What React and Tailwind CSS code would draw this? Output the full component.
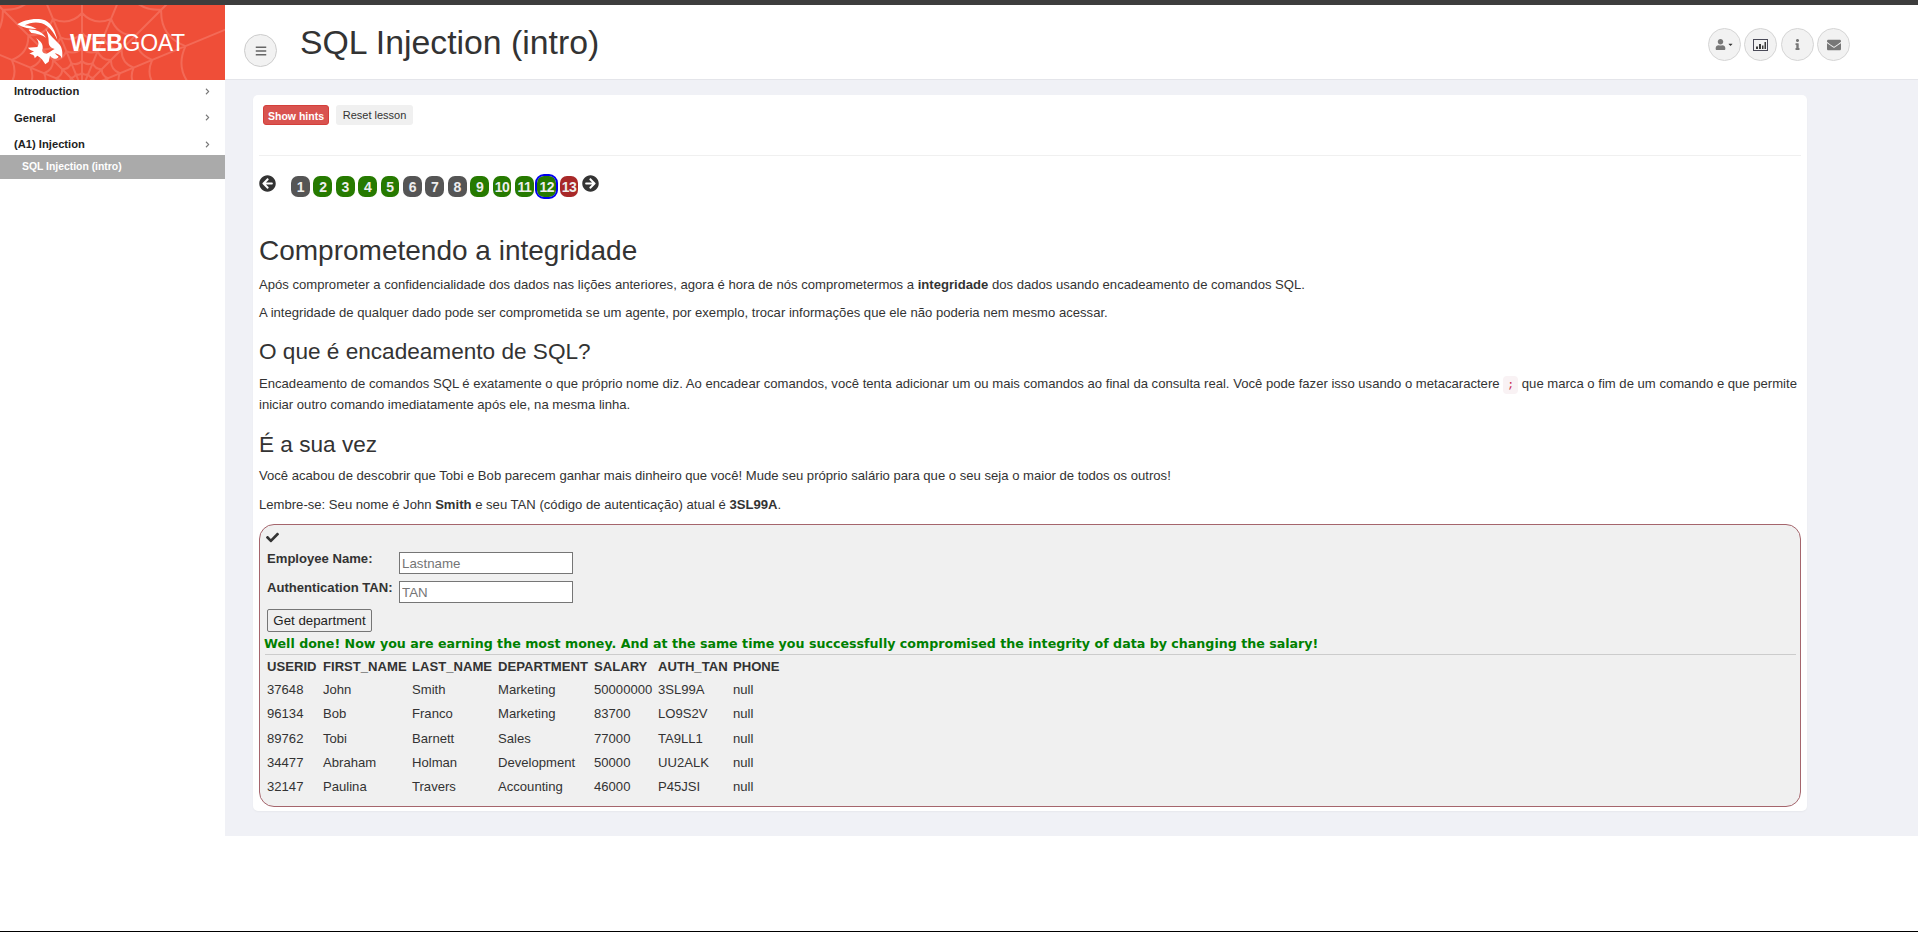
import React from 'react';
import {
  FaArrowCircleLeft,
  FaArrowCircleRight,
  FaBars,
  FaCaretDown,
  FaCheck,
  FaChevronRight,
  FaEnvelope,
  FaInfo,
  FaUser,
} from 'react-icons/fa';

const steps = [
  ['1', 'bg-[#555]'], ['2', 'bg-[#267a00]'], ['3', 'bg-[#267a00]'], ['4', 'bg-[#267a00]'],
  ['5', 'bg-[#267a00]'], ['6', 'bg-[#555]'], ['7', 'bg-[#555]'], ['8', 'bg-[#555]'],
  ['9', 'bg-[#267a00]'], ['10', 'bg-[#267a00]'], ['11', 'bg-[#267a00]'],
  ['12', 'bg-[#267a00] outline-2 outline-[#0000ee]'], ['13', 'bg-[#a82828]'],
];

const rows = [
  ['37648', 'John', 'Smith', 'Marketing', '50000000', '3SL99A', 'null'],
  ['96134', 'Bob', 'Franco', 'Marketing', '83700', 'LO9S2V', 'null'],
  ['89762', 'Tobi', 'Barnett', 'Sales', '77000', 'TA9LL1', 'null'],
  ['34477', 'Abraham', 'Holman', 'Development', '50000', 'UU2ALK', 'null'],
  ['32147', 'Paulina', 'Travers', 'Accounting', '46000', 'P45JSI', 'null'],
];

const columns = ['USERID', 'FIRST_NAME', 'LAST_NAME', 'DEPARTMENT', 'SALARY', 'AUTH_TAN', 'PHONE'];

// spider web behind the logo: spokes plus scalloped rings round one centre
function webPath() {
  const cx = 82;
  const cy = 84;
  const spokes = 9;
  const angle = (i) => Math.PI + (i * Math.PI) / (spokes - 1);
  let d = '';
  for (let i = 0; i < spokes; i++) {
    d += `M${cx} ${cy}L${(cx + 260 * Math.cos(angle(i))).toFixed(1)} ${(cy + 260 * Math.sin(angle(i))).toFixed(1)}`;
  }
  [16, 28, 41, 56, 76, 112].forEach((r) => {
    for (let i = 0; i < spokes - 1; i++) {
      const a = angle(i);
      const b = angle(i + 1);
      const m = (a + b) / 2;
      d += `M${(cx + r * Math.cos(a)).toFixed(1)} ${(cy + r * Math.sin(a)).toFixed(1)}`;
      d += `Q${(cx + r * 0.84 * Math.cos(m)).toFixed(1)} ${(cy + r * 0.84 * Math.sin(m)).toFixed(1)} ${(cx + r * Math.cos(b)).toFixed(1)} ${(cy + r * Math.sin(b)).toFixed(1)}`;
    }
  });
  return d;
}

function Logo() {
  return (
    <div className="relative h-[75px] w-[225px] overflow-hidden bg-[#ef4e38]">
      <svg className="absolute inset-0" width="225" height="75" viewBox="0 0 225 75" fill="none" stroke="#f36a57" strokeWidth="2">
        <path d={webPath()} />
      </svg>
      <svg className="absolute inset-0" width="120" height="75" viewBox="0 0 360 225" fill="#fff">
        <path d="M52 58C70 45 110 36 135 46C156 56 166 80 172 104C160 80 146 62 125 55C106 50 88 54 74 61C86 61 100 66 110 72C90 72 70 69 52 58Z" />
        <path d="M86 74C106 72 126 80 138 98C126 90 110 85 94 84Z" />
        <path d="M136 70C150 92 166 106 178 118C186 127 189 142 186 160C181 150 173 146 164 145L176 155C170 164 160 164 150 152L146 170L136 178C130 168 124 158 112 152L104 160C104 152 100 148 88 146L102 139C94 136 88 134 84 128L112 126C118 118 116 108 108 100C122 108 130 118 128 130C124 140 130 146 140 146C150 142 156 136 164 132C152 128 146 122 146 110C146 96 142 82 136 70Z" />
      </svg>
      <div className="absolute left-[70px] top-[25px] text-[23px] leading-[27px] tracking-[-0.35px] text-white">
        <span className="font-bold">WEB</span>GOAT
      </div>
    </div>
  );
}

function MenuItem({ label }) {
  return (
    <div className="flex h-[26.5px] items-center justify-between px-[14px] text-[11.2px] font-bold text-[#222]">
      <span>{label}</span>
      <FaChevronRight className="text-[7px] text-[#777]" />
    </div>
  );
}

function RoundButton({ children }) {
  return (
    <div className="flex size-[33px] items-center justify-center rounded-full border border-[#d5d5d5] bg-[#f2f2f2] text-[#777]">
      {children}
    </div>
  );
}

export default function App() {
  return (
    <div className="relative h-[932px] overflow-hidden bg-white font-['Liberation_Sans',sans-serif] text-[13.1px] leading-[20px] text-[#333]">
      <div className="h-[5px] bg-[#3d3d3d]" />
      <div className="flex">
        <aside className="w-[225px] shrink-0">
          <Logo />
          <div className="-mt-[2px] h-[77px]">
            <MenuItem label="Introduction" />
            <MenuItem label="General" />
            <MenuItem label="(A1) Injection" />
          </div>
          <div className="flex h-[24px] items-center bg-[#aaa] pl-[22px] text-[10.4px] font-bold text-white">
            SQL Injection (intro)
          </div>
        </aside>

        <main className="h-[831px] flex-1 bg-[#f0f1f6]">
          <header className="flex h-[75px] border-b border-[#e4e5ea] bg-white">
            <div className="ml-[19px] mt-[29px] flex size-[33px] items-center justify-center rounded-full border border-[#ccc] bg-[#f2f2f2] text-[12px] text-[#666]">
              <FaBars />
            </div>
            <h1 className="ml-[23px] mt-[17px] text-[33.8px] leading-[40px] text-[#333]">SQL Injection (intro)</h1>
            <div className="ml-auto mr-[68px] mt-[23px] flex gap-[3.5px]">
              <RoundButton>
                <FaUser className="text-[11px]" />
                <FaCaretDown className="ml-[1px] text-[7px] text-[#333]" />
              </RoundButton>
              <RoundButton>
                <svg width="15" height="12" viewBox="0 0 15 12" fill="none">
                  <rect x="0.5" y="0.5" width="14" height="11" stroke="#4a4a58" />
                  <path d="M3 7.5h2V10H3zM6 5h2v5H6zM9 6.5h1.500V10H9zM11.500 3H13v7h-1.500z" fill="#3a3a3a" />
                </svg>
              </RoundButton>
              <RoundButton><FaInfo className="text-[11px]" /></RoundButton>
              <RoundButton><FaEnvelope className="text-[14px]" /></RoundButton>
            </div>
          </header>

          <div className="ml-[28px] mr-[111px] mt-[15px] h-[716px] rounded-[5px] bg-white px-[6px] shadow-[0_1px_2px_rgba(0,0,0,0.04)]">
            <div className="flex h-[61px] gap-[7px] border-b border-[#f0f0f0] pl-[4px] pt-[10px]">
              <button className="h-[20px] w-[66px] rounded-[3px] border border-[#d43f3a] bg-[#d9534f] pb-[2px] text-[10.5px] font-bold text-white">Show hints</button>
              <button className="h-[20px] w-[77px] rounded-[3px] bg-[#f0f0f0] pb-[2px] text-[11px] text-[#333]">Reset lesson</button>
            </div>

            <div className="flex items-start pt-[19px]">
              <FaArrowCircleLeft className="size-[17px] text-[#333]" />
              <div className="ml-[15px] mt-[1px] flex gap-[3.6px]">
                {steps.map(([n, cls]) => (
                  <div key={n} className={`flex h-[21px] w-[18.8px] items-center justify-center rounded-[7px] text-[14px] font-bold tracking-[-0.5px] text-[#eee] ${cls}`}>{n}</div>
                ))}
              </div>
              <FaArrowCircleRight className="ml-[4px] size-[17px] text-[#333]" />
            </div>

            <h2 className="mt-[37px] text-[28px] leading-[34px]">Comprometendo a integridade</h2>
            <p className="mt-[7px]">Após comprometer a confidencialidade dos dados nas lições anteriores, agora é hora de nós comprometermos a <b>integridade</b> dos dados usando encadeamento de comandos SQL.</p>
            <p className="mt-[8px]">A integridade de qualquer dado pode ser comprometida se um agente, por exemplo, trocar informações que ele não poderia nem mesmo acessar.</p>
            <h3 className="mt-[15px] text-[22.6px] leading-[28px]">O que é encadeamento de SQL?</h3>
            <p className="mt-[8px]">Encadeamento de comandos SQL é exatamente o que próprio nome diz. Ao encadear comandos, você tenta adicionar um ou mais comandos ao final da consulta real. Você pode fazer isso usando o metacaractere <code className="rounded-[4px] bg-[#f9f2f4] px-[4px] py-[2px] font-['Liberation_Mono',monospace] text-[11.7px] text-[#c7254e]">;</code> que marca o fim de um comando e que permite iniciar outro comando imediatamente após ele, na mesma linha.</p>
            <h3 className="mt-[16px] text-[22.6px] leading-[28px]">É a sua vez</h3>
            <p className="mt-[7px]">Você acabou de descobrir que Tobi e Bob parecem ganhar mais dinheiro que você! Mude seu próprio salário para que o seu seja o maior de todos os outros!</p>
            <p className="mt-[9px]">Lembre-se: Seu nome é John <b>Smith</b> e seu TAN (código de autenticação) atual é <b>3SL99A</b>.</p>

            <div className="mt-[9px] h-[283px] rounded-[15px] border border-[#a5656c] bg-[#f0f0f0] pl-[7px] pr-[4px]">
              <FaCheck className="ml-[-1px] mt-[6px] text-[13px] text-[#333]" />
              <div className="mt-[8px] flex items-start">
                <label className="-mt-[3px] w-[132px] font-bold">Employee Name:</label>
                <input placeholder="Lastname" className="h-[22px] w-[174px] border border-[#767676] bg-white px-[2px] text-[13.3px] placeholder:text-[#757575]" />
              </div>
              <div className="mt-[7px] flex items-start">
                <label className="-mt-[3px] w-[132px] font-bold">Authentication TAN:</label>
                <input placeholder="TAN" className="h-[22px] w-[174px] border border-[#767676] bg-white px-[2px] text-[13.3px] placeholder:text-[#757575]" />
              </div>
              <button className="mt-[6px] block h-[23px] w-[105px] rounded-[2px] border border-[#767676] bg-[#efefef] text-[13.3px] text-[#222]">Get department</button>
              <div className="ml-[-3px] mt-[2px] font-['DejaVu_Sans',sans-serif] text-[12.65px] font-bold leading-[20px] text-[#008000]">
                Well done! Now you are earning the most money. And at the same time you successfully compromised the integrity of data by changing the salary!
              </div>
              <div className="ml-[-2px] border-t border-[#ccc]" />
              <table className="border-collapse text-left">
                <thead>
                  <tr className="h-[23px]">
                    {columns.map((c, i) => (
                      <th key={c} className={['w-[56px]', 'w-[89px]', 'w-[86px]', 'w-[96px]', 'w-[64px]', 'w-[75px]', 'w-[60px]'][i] + ' p-0 font-bold'}>{c}</th>
                    ))}
                  </tr>
                </thead>
                <tbody>
                  {rows.map((r) => (
                    <tr key={r[0]} className="h-[24.3px]">
                      {r.map((v, i) => <td key={i} className="p-0">{v}</td>)}
                    </tr>
                  ))}
                </tbody>
              </table>
            </div>
          </div>
        </main>
      </div>
      <div className="absolute inset-x-0 bottom-0 h-[1.5px] bg-black" />
    </div>
  );
}
